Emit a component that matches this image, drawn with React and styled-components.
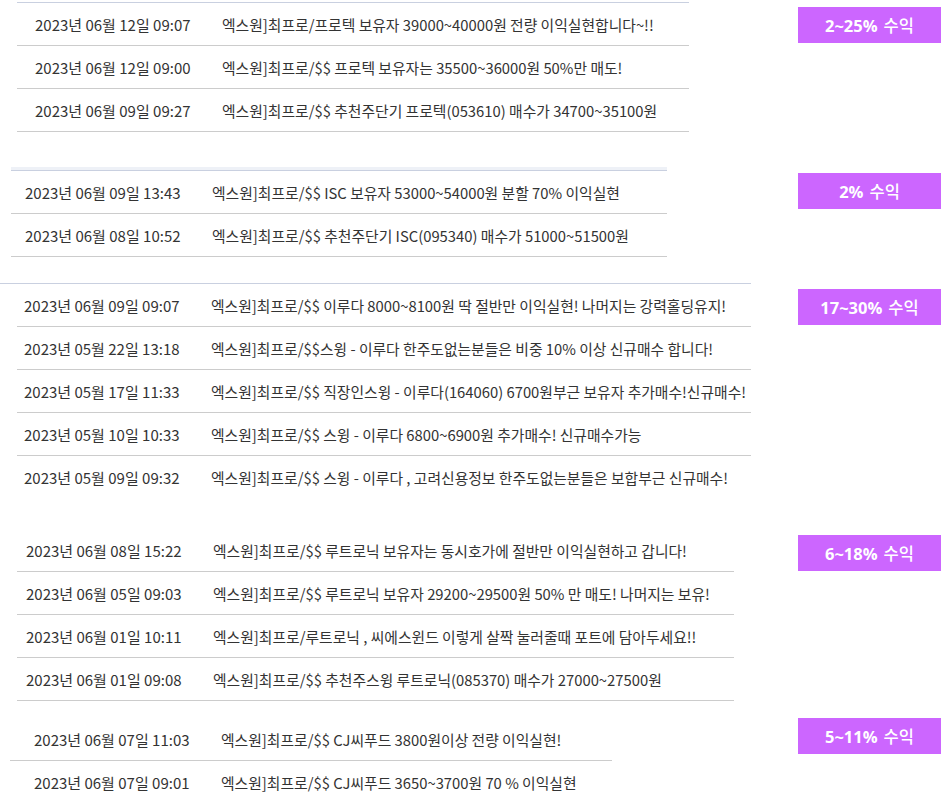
import React from "react";
import styled, { createGlobalStyle } from "styled-components";

const GlobalStyle = createGlobalStyle`
  html, body { margin: 0; padding: 0; background: #ffffff; }
  body {
    font-family: "Noto Sans CJK KR", "Noto Sans", "Liberation Sans", sans-serif;
    color: #333333;
  }
`;

const Page = styled.div`
  width: 943px;
  display: flex;
  flex-direction: column;
`;

const Group = styled.section`
  display: flex;
  justify-content: space-between;
  align-items: flex-start;
  margin-top: ${(p) => p.$top}px;
`;

const Table = styled.div`
  margin-left: ${(p) => p.$left}px;
  width: ${(p) => p.$width}px;
  display: flex;
  flex-direction: column;
`;

const TopBand = styled.div`
  height: ${(p) => p.$h}px;
  background: #eef1f7;
`;

const TopRule = styled.div`
  height: 1px;
  background: #c9d0e0;
  margin-left: ${(p) => p.$extend || 0}px;
`;

const Row = styled.div`
  display: grid;
  grid-template-columns: ${(p) => p.$dateW}px 1fr;
  align-items: center;
  height: 42px;
  border-bottom: 1px solid ${(p) => (p.$last ? "transparent" : "#cccccc")};
  font-size: 14.8px;
  white-space: nowrap;
`;

const DateCell = styled.div`
  padding-left: ${(p) => p.$pad}px;
  color: #333333;
  font-size: 15px;
`;

const MsgCell = styled.div`
  color: #333333;
`;

const Badge = styled.div`
  width: 143px;
  height: 36px;
  margin-top: ${(p) => p.$top}px;
  margin-right: 2px;
  background: #cc66ff;
  color: #ffffff;
  display: flex;
  align-items: center;
  justify-content: center;
  gap: 6px;
  font-size: 16.5px;
  flex-shrink: 0;
`;

const BadgeNum = styled.span`
  font-family: "Open Sans", "Noto Sans", sans-serif;
  font-weight: 700;
`;

const BadgeWord = styled.span`
  font-weight: 500;
`;

const groups = [
  {
    top: 2,
    left: 17,
    width: 672,
    datePad: 18,
    dateW: 205,
    band: 0,
    rule: true,
    ruleExtend: 0,
    badgeTop: 5,
    badge: "2~25%",
    lastOpen: false,
    rows: [
      ["2023년 06월 12일 09:07", "엑스원]최프로/프로텍 보유자 39000~40000원 전량 이익실현합니다~!!"],
      ["2023년 06월 12일 09:00", "엑스원]최프로/$$ 프로텍 보유자는 35500~36000원 50%만 매도!"],
      ["2023년 06월 09일 09:27", "엑스원]최프로/$$ 추천주단기 프로텍(053610) 매수가 34700~35100원"],
    ],
  },
  {
    top: 35,
    left: 11,
    width: 656,
    datePad: 14,
    dateW: 201,
    band: 3,
    rule: true,
    ruleExtend: 0,
    badgeTop: 6,
    badge: "2%",
    lastOpen: false,
    rows: [
      ["2023년 06월 09일 13:43", "엑스원]최프로/$$ ISC 보유자 53000~54000원 분할 70% 이익실현"],
      ["2023년 06월 08일 10:52", "엑스원]최프로/$$ 추천주단기 ISC(095340) 매수가 51000~51500원"],
    ],
  },
  {
    top: 26,
    left: 17,
    width: 734,
    datePad: 7,
    dateW: 194,
    band: 0,
    rule: true,
    ruleExtend: -17,
    badgeTop: 6,
    badge: "17~30%",
    lastOpen: true,
    rows: [
      ["2023년 06월 09일 09:07", "엑스원]최프로/$$ 이루다 8000~8100원 딱 절반만 이익실현! 나머지는 강력홀딩유지!"],
      ["2023년 05월 22일 13:18", "엑스원]최프로/$$스윙 - 이루다 한주도없는분들은 비중 10% 이상 신규매수 합니다!"],
      ["2023년 05월 17일 11:33", "엑스원]최프로/$$ 직장인스윙 - 이루다(164060) 6700원부근 보유자 추가매수!신규매수!"],
      ["2023년 05월 10일 10:33", "엑스원]최프로/$$ 스윙 - 이루다 6800~6900원 추가매수! 신규매수가능"],
      ["2023년 05월 09일 09:32", "엑스원]최프로/$$ 스윙 - 이루다 , 고려신용정보 한주도없는분들은 보합부근 신규매수!"],
    ],
  },
  {
    top: 30,
    left: 17,
    width: 717,
    datePad: 9,
    dateW: 196,
    band: 0,
    rule: false,
    ruleExtend: 0,
    badgeTop: 6,
    badge: "6~18%",
    lastOpen: false,
    rows: [
      ["2023년 06월 08일 15:22", "엑스원]최프로/$$ 루트로닉 보유자는 동시호가에 절반만 이익실현하고 갑니다!"],
      ["2023년 06월 05일 09:03", "엑스원]최프로/$$ 루트로닉 보유자 29200~29500원 50% 만 매도! 나머지는 보유!"],
      ["2023년 06월 01일 10:11", "엑스원]최프로/루트로닉 , 씨에스윈드 이렇게 살짝 눌러줄때 포트에 담아두세요!!"],
      ["2023년 06월 01일 09:08", "엑스원]최프로/$$ 추천주스윙 루트로닉(085370) 매수가 27000~27500원"],
    ],
  },
  {
    top: 17,
    left: 10,
    width: 602,
    datePad: 24,
    dateW: 211,
    band: 0,
    rule: false,
    ruleExtend: 0,
    badgeTop: 0,
    badge: "5~11%",
    lastOpen: true,
    rows: [
      ["2023년 06월 07일 11:03", "엑스원]최프로/$$ CJ씨푸드 3800원이상 전량 이익실현!"],
      ["2023년 06월 07일 09:01", "엑스원]최프로/$$ CJ씨푸드 3650~3700원 70 % 이익실현"],
    ],
  },
];

export default function App() {
  return (
    <>
      <GlobalStyle />
      <Page>
        {groups.map((g, gi) => (
          <Group key={gi} $top={g.top}>
            <Table $left={g.left} $width={g.width}>
              {g.band > 0 && <TopBand $h={g.band} />}
              {g.rule && <TopRule $extend={g.ruleExtend} />}
              {g.rows.map((r, ri) => (
                <Row
                  key={ri}
                  $dateW={g.dateW}
                  $last={g.lastOpen && ri === g.rows.length - 1}
                >
                  <DateCell $pad={g.datePad}>{r[0]}</DateCell>
                  <MsgCell>{r[1]}</MsgCell>
                </Row>
              ))}
            </Table>
            <Badge $top={g.badgeTop}>
              <BadgeNum>{g.badge}</BadgeNum>
              <BadgeWord>수익</BadgeWord>
            </Badge>
          </Group>
        ))}
      </Page>
    </>
  );
}
